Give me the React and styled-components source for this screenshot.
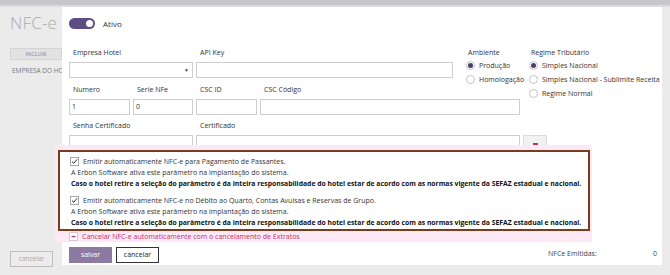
import styled, { createGlobalStyle } from "styled-components";

const GlobalStyle = createGlobalStyle`
  html, body {
    margin: 0;
    padding: 0;
  }
  body {
    width: 670px;
    height: 275px;
    overflow: hidden;
    background: #ebebeb;
    font-family: "Open Sans", "Noto Sans", sans-serif;
    color: #333;
  }
`;

const Page = styled.div`
  display: flex;
  flex-direction: column;
  height: 275px;
`;

const TopStrip = styled.div`
  height: 5px;
  background: #c6c6cb;
  border-bottom: 2px solid #dcdcde;
`;

const Body = styled.div`
  flex: 1;
  display: flex;
  min-height: 0;
`;

/* Left list panel (behind the modal) */
const Sidebar = styled.div`
  width: 62px;
  padding: 5px 0 0 10px;
  box-sizing: border-box;
  display: flex;
  flex-direction: column;
  white-space: nowrap;
`;

const PageTitle = styled.div`
  font-size: 17px;
  line-height: 22px;
  font-weight: 300;
  color: #ababab;
  letter-spacing: 0.2px;
`;

const SideButton = styled.div`
  margin-top: 14px;
  width: 52px;
  height: 12px;
  box-sizing: border-box;
  background: #e2e2e2;
  border: 1px solid #d4d4d4;
  font-size: 5.5px;
  line-height: 10px;
  text-align: center;
  color: #888;
`;

const SideItem = styled.div`
  margin-top: 6px;
  margin-left: 2px;
  font-size: 6.5px;
  color: #7a7a7a;
`;

const GhostButton = styled.div`
  margin-top: auto;
  margin-bottom: 8px;
  width: 43px;
  height: 16px;
  box-sizing: border-box;
  border: 1px solid #bdbdbd;
  background: #ececec;
  color: #a8a8a8;
  font-size: 6.5px;
  line-height: 14px;
  text-align: center;
`;

/* Modal */
const Modal = styled.div`
  position: relative;
  z-index: 1;
  flex: 1;
  margin: 0 8px 10px 0;
  background: #fff;
  padding: 11px 0 0 7px;
  display: flex;
  flex-direction: column;
`;

const ToggleRow = styled.div`
  display: flex;
  align-items: center;
  gap: 8px;
  height: 11px;
  font-size: 8px;
  color: #333;
`;

const Toggle = styled.div`
  width: 26px;
  height: 11px;
  border-radius: 6px;
  background: #5e4c85;
  display: flex;
  align-items: center;
  justify-content: flex-end;
  padding-right: 2px;
  box-sizing: border-box;
  &::after {
    content: "";
    width: 7px;
    height: 7px;
    border-radius: 50%;
    background: #fff;
  }
`;

const FormGrid = styled.div`
  margin-top: 18px;
  display: grid;
  grid-template-columns: 396px 64px 1fr;
  grid-template-rows: 31px 31px 25px;
  row-gap: 5.5px;
`;

const FieldRow = styled.div`
  display: flex;
  gap: 3px;
  grid-column: ${(p) => p.$span || "1"};
  grid-row: ${(p) => p.$row};
  align-items: flex-start;
`;

const Field = styled.div`
  width: ${(p) => p.$w}px;
  display: flex;
  flex-direction: column;
`;

const Label = styled.div`
  font-size: 7px;
  line-height: 11px;
  height: 11px;
  padding-left: 4px;
  margin-bottom: 4px;
  color: #333;
  white-space: nowrap;
`;

const Input = styled.div`
  height: ${(p) => (p.$clipped ? 10 : 16)}px;
  box-sizing: border-box;
  border: 1px solid #cfcfcf;
  border-bottom: ${(p) => (p.$clipped ? "none" : "1px solid #cfcfcf")};
  font-size: 7px;
  line-height: 13px;
  padding-left: 2px;
  display: flex;
  align-items: center;
  justify-content: space-between;
  color: #333;
`;

const Caret = styled.span`
  font-size: 5px;
  color: #444;
  margin-right: 3px;
`;

const SmallButton = styled.div`
  margin-top: 15px;
  width: 24px;
  height: 10px;
  box-sizing: border-box;
  border: 1px solid #dcdcdc;
  border-bottom: none;
  background: #f2f2f2;
  display: flex;
  justify-content: center;
  padding-top: 7px;
  &::after {
    content: "";
    width: 5px;
    height: 1.5px;
    background: #c0306a;
  }
`;

const RadioGroup = styled.div`
  grid-column: ${(p) => p.$col};
  grid-row: ${(p) => p.$row};
  align-self: start;
  display: flex;
  flex-direction: column;
  padding-left: ${(p) => p.$pad}px;
`;

const GroupLabel = styled.div`
  font-size: 7px;
  line-height: 11px;
  padding-left: 2px;
  color: #333;
  white-space: nowrap;
`;

const RadioItem = styled.div`
  display: flex;
  align-items: center;
  gap: 4px;
  height: 14px;
  font-size: 7px;
  color: #333;
  white-space: nowrap;
`;

const RadioDot = styled.span`
  width: 9px;
  height: 9px;
  box-sizing: border-box;
  border-radius: 50%;
  border: 1px solid #c4c4c4;
  background: #fff;
  display: flex;
  align-items: center;
  justify-content: center;
  &::after {
    content: "";
    width: 5px;
    height: 5px;
    border-radius: 50%;
    background: ${(p) => (p.$on ? "#4b3b6c" : "transparent")};
  }
`;

/* Highlighted check block */
const Highlight = styled.div`
  margin-left: -14px;
  width: 537px;
  background: #fde8f6;
  padding: 5px 2px 0 3px;
  box-sizing: border-box;
`;

const NoticeBox = styled.div`
  border: 2px solid #7a3c1c;
  background: #fff;
  padding: 4px 0 1px 10px;
  display: flex;
  flex-direction: column;
  gap: 6px;
`;

const Notice = styled.div`
  display: flex;
  flex-direction: column;
  font-size: 7px;
  line-height: 11px;
  color: #333;
  white-space: nowrap;
`;

const CheckLine = styled.div`
  display: flex;
  align-items: center;
  gap: 4px;
`;

const CheckBox = styled.span`
  width: 9px;
  height: 9px;
  box-sizing: border-box;
  border: 1px solid ${(p) => (p.$minus ? "#e2c4d4" : "#a8a8a8")};
  background: #fff;
  display: flex;
  align-items: center;
  justify-content: center;
`;

const SubLine = styled.div`
  padding-left: 1px;
  font-size: ${(p) => (p.$bold ? 6.8 : 7)}px;
  font-weight: ${(p) => (p.$bold ? 700 : 400)};
  color: ${(p) => (p.$bold ? "#111" : "#333")};
`;

const CancelRow = styled.div`
  display: flex;
  align-items: center;
  gap: 4px;
  height: 11px;
  padding-left: 11px;
  font-size: 7px;
  color: #c2306a;
  white-space: nowrap;
`;

const Footer = styled.div`
  margin-top: 5px;
  display: flex;
  align-items: center;
  gap: 4px;
`;

const Button = styled.div`
  width: 43px;
  height: 16px;
  box-sizing: border-box;
  font-size: 7px;
  line-height: 14px;
  text-align: center;
  background: ${(p) => (p.$primary ? "#8c7aa3" : "#fff")};
  color: ${(p) => (p.$primary ? "#fff" : "#222")};
  border: 1px solid ${(p) => (p.$primary ? "#8c7aa3" : "#333")};
`;

const Stats = styled.div`
  flex: 1;
  display: grid;
  grid-template-columns: 1fr 50px 59px;
  padding-right: 5px;
  margin-top: -4px;
  font-size: 7px;
  color: #444;
  white-space: nowrap;
  span:last-child {
    text-align: right;
  }
`;

function Check() {
  return (
    <svg width="7" height="7" viewBox="0 0 7 7">
      <path d="M1 3.6 L2.8 5.3 L6 1.4" fill="none" stroke="#222" strokeWidth="1" />
    </svg>
  );
}

function Minus() {
  return (
    <svg width="7" height="7" viewBox="0 0 7 7">
      <path d="M1.5 3.5 H5.5" stroke="#c2306a" strokeWidth="1.2" />
    </svg>
  );
}

const notices = [
  "Emitir automaticamente NFC-e para Pagamento de Passantes.",
  "Emitir automaticamente NFC-e no Débito ao Quarto, Contas Avulsas e Reservas de Grupo.",
];

export default function App() {
  return (
    <>
      <GlobalStyle />
      <Page>
        <TopStrip />
        <Body>
          <Sidebar>
            <PageTitle>NFC-e</PageTitle>
            <SideButton>INCLUIR</SideButton>
            <SideItem>EMPRESA DO HOTEL</SideItem>
            <GhostButton>cancelar</GhostButton>
          </Sidebar>

          <Modal>
            <ToggleRow>
              <Toggle />
              <span>Ativo</span>
            </ToggleRow>

            <FormGrid>
              <FieldRow $row="1">
                <Field $w={124}>
                  <Label>Empresa Hotel</Label>
                  <Input>
                    <span />
                    <Caret>▼</Caret>
                  </Input>
                </Field>
                <Field $w={257}>
                  <Label>API Key</Label>
                  <Input />
                </Field>
              </FieldRow>

              <RadioGroup $col="2" $row="1" $pad={1}>
                <GroupLabel>Ambiente</GroupLabel>
                <RadioItem>
                  <RadioDot $on />
                  Produção
                </RadioItem>
                <RadioItem>
                  <RadioDot />
                  Homologação
                </RadioItem>
              </RadioGroup>

              <RadioGroup $col="3" $row="1 / span 2" $pad={0}>
                <GroupLabel>Regime Tributário</GroupLabel>
                <RadioItem>
                  <RadioDot $on />
                  Simples Nacional
                </RadioItem>
                <RadioItem>
                  <RadioDot />
                  Simples Nacional - Sublimite Receita
                </RadioItem>
                <RadioItem>
                  <RadioDot />
                  Regime Normal
                </RadioItem>
              </RadioGroup>

              <FieldRow $span="1 / span 2" $row="2">
                <Field $w={61}>
                  <Label>Numero</Label>
                  <Input>1</Input>
                </Field>
                <Field $w={60}>
                  <Label>Serie NFe</Label>
                  <Input>0</Input>
                </Field>
                <Field $w={61}>
                  <Label>CSC ID</Label>
                  <Input />
                </Field>
                <Field $w={260}>
                  <Label>CSC Código</Label>
                  <Input />
                </Field>
              </FieldRow>

              <FieldRow $span="1 / span 3" $row="3">
                <Field $w={124}>
                  <Label>Senha Certificado</Label>
                  <Input $clipped />
                </Field>
                <Field $w={324}>
                  <Label>Certificado</Label>
                  <Input $clipped />
                </Field>
                <SmallButton />
              </FieldRow>
            </FormGrid>

            <Highlight>
              <NoticeBox>
                {notices.map((text) => (
                  <Notice key={text}>
                    <CheckLine>
                      <CheckBox>
                        <Check />
                      </CheckBox>
                      {text}
                    </CheckLine>
                    <SubLine>A Erbon Software ativa este parâmetro na implantação do sistema.</SubLine>
                    <SubLine $bold>
                      Caso o hotel retire a seleção do parâmetro é da inteira responsabilidade do hotel estar de
                      acordo com as normas vigente da SEFAZ estadual e nacional.
                    </SubLine>
                  </Notice>
                ))}
              </NoticeBox>
              <CancelRow>
                <CheckBox $minus>
                  <Minus />
                </CheckBox>
                Cancelar NFC-e automaticamente com o cancelamento de Extratos
              </CancelRow>
            </Highlight>

            <Footer>
              <Button $primary>salvar</Button>
              <Button>cancelar</Button>
              <Stats>
                <span />
                <span>NFCe Emitidas:</span>
                <span>0</span>
              </Stats>
            </Footer>
          </Modal>
        </Body>
      </Page>
    </>
  );
}
